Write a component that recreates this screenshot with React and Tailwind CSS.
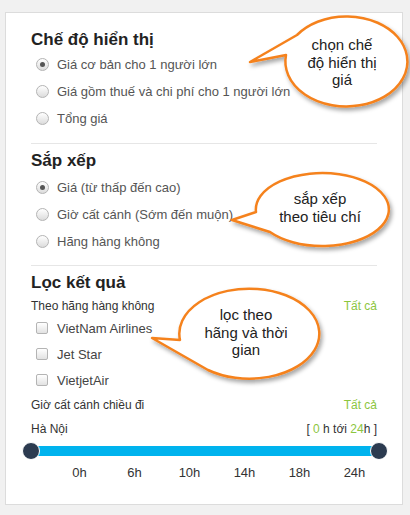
import React from "react";

const font = { fontFamily: '"Liberation Sans", Arial, sans-serif' };

function Radio({ checked }) {
  return (
    <span className="w-[13px] h-[13px] rounded-full border border-[#b4b4b4] bg-gradient-to-b from-white to-[#dcdcdc] flex items-center justify-center shrink-0">
      {checked && <span className="w-[5px] h-[5px] rounded-full bg-[#555]" />}
    </span>
  );
}

function Check() {
  return (
    <span className="w-[12px] h-[12px] rounded-[2px] border border-[#b4b4b4] bg-gradient-to-b from-white to-[#e2e2e2] shrink-0 -mt-[2px]" />
  );
}

function RadioRow({ checked, children }) {
  return (
    <div className="h-[27px] flex items-center pl-[5px] gap-[8px] text-[13px] text-[#555]">
      <Radio checked={checked} />
      <span>{children}</span>
    </div>
  );
}

function CheckRow({ children }) {
  return (
    <div className="h-[26px] flex items-center pl-[5px] gap-[9px] text-[13px] text-[#444]">
      <Check />
      <span>{children}</span>
    </div>
  );
}

export default function App() {
  return (
    <div style={font} className="relative w-[410px] h-[515px] bg-[#f1f1f1] pt-[12px] pl-[5px]">
      <div className="w-[398px] h-[493px] bg-white border border-[#dcdcdc] px-[25px] pt-[16px]">
        <div className="h-[22px] leading-[22px] text-[17px] font-bold text-[#222]">Chế độ hiển thị</div>
        <RadioRow checked>Giá cơ bản cho 1 người lớn</RadioRow>
        <RadioRow>Giá gồm thuế và chi phí cho 1 người lớn</RadioRow>
        <RadioRow>Tổng giá</RadioRow>
        <div className="mt-[11px] border-t border-[#e6e6e6]" />

        <div className="mt-[6px] h-[22px] leading-[22px] text-[17px] font-bold text-[#222]">Sắp xếp</div>
        <div className="mt-[2px]">
          <RadioRow checked>Giá (từ thấp đến cao)</RadioRow>
          <RadioRow>Giờ cất cánh (Sớm đến muộn)</RadioRow>
          <RadioRow>Hãng hàng không</RadioRow>
        </div>
        <div className="mt-[10px] border-t border-[#e6e6e6]" />

        <div className="mt-[6px] h-[22px] leading-[22px] text-[17px] font-bold text-[#222]">Lọc kết quả</div>
        <div className="mt-[2px] h-[20px] flex items-center justify-between text-[12px]">
          <span className="text-[#333]">Theo hãng hàng không</span>
          <span className="text-[#8cc63e]">Tất cả</span>
        </div>
        <CheckRow>VietNam Airlines</CheckRow>
        <CheckRow>Jet Star</CheckRow>
        <CheckRow>VietjetAir</CheckRow>
        <div className="mt-[1px] h-[20px] flex items-center justify-between text-[12px]">
          <span className="text-[#333]">Giờ cất cánh chiều đi</span>
          <span className="text-[#8cc63e]">Tất cả</span>
        </div>
        <div className="mt-[4px] h-[20px] flex items-center justify-between text-[12px] text-[#333]">
          <span>Hà Nội</span>
          <span>
            [ <span className="text-[#8cc63e]">0</span> h tới <span className="text-[#8cc63e]">24</span>h ]
          </span>
        </div>
        <div className="mt-[4px] relative h-[16px] flex items-center">
          <div className="w-full h-[10px] bg-[#00b3ee]" />
          <span className="absolute left-[-9px] top-[-1px] w-[18px] h-[18px] rounded-full bg-[#2c3b50] border border-white" />
          <span className="absolute right-[-11px] top-[-1px] w-[18px] h-[18px] rounded-full bg-[#2c3b50] border border-white" />
        </div>
        <div className="mt-[4px] ml-[21px] grid grid-cols-[repeat(6,55px)] h-[18px] items-center text-[13px] text-[#333] text-center">
          <span>0h</span>
          <span>6h</span>
          <span>10h</span>
          <span>14h</span>
          <span>18h</span>
          <span>24h</span>
        </div>
      </div>

      <svg className="absolute left-0 top-0 pointer-events-none" width="410" height="515" viewBox="0 0 410 515">
        <defs>
          <filter id="sh" x="-20%" y="-20%" width="140%" height="140%">
            <feDropShadow dx="2" dy="3" stdDeviation="2" floodColor="#000" floodOpacity="0.35" />
          </filter>
        </defs>
        <g fill="#fff" stroke="#f5821f" strokeWidth="2.5" strokeLinejoin="round" filter="url(#sh)">
          <path d="M 297 35 A 61 45 0 1 1 286 55 L 250 62 Z" />
          <path d="M 256 212 A 66.5 36.5 0 1 1 270 232 L 232 220 Z" />
          <path d="M 180 340 A 70 45 0 1 1 208 370 L 152 338 Z" />
        </g>
      </svg>

      <div className="absolute left-[292px] top-[36px] w-[100px] text-center text-[15px] leading-[17.5px] text-[#222]">
        chọn chế<br />độ hiển thị<br />giá
      </div>
      <div className="absolute left-[270px] top-[190px] w-[100px] text-center text-[15px] leading-[17.5px] text-[#222]">
        sắp xếp<br />theo tiêu chí
      </div>
      <div className="absolute left-[196px] top-[306px] w-[100px] text-center text-[15px] leading-[17.5px] text-[#222]">
        lọc theo<br />hãng và thời<br />gian
      </div>
    </div>
  );
}
